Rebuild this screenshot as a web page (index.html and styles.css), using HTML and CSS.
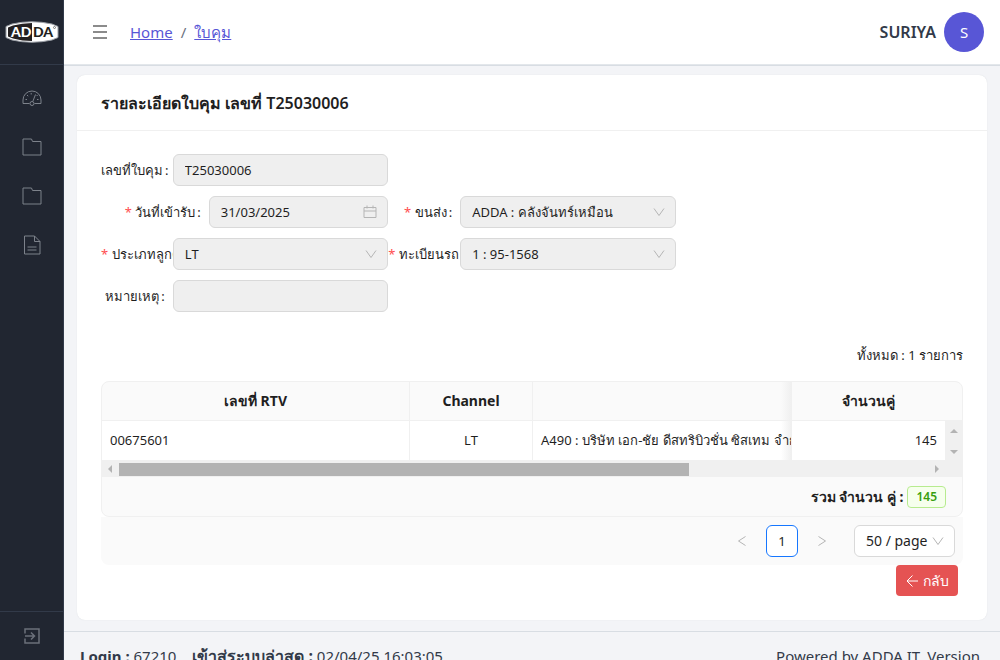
FILE: index.html
```html
<!DOCTYPE html>
<html lang="th">
<head>
<meta charset="utf-8">
<meta name="viewport" content="width=device-width, initial-scale=1">
<title>ใบคุม T25030006</title>
<link rel="stylesheet" href="styles.css">
</head>
<body>
<div class="app">
  <aside class="sidebar">
    <a class="brand" href="#" aria-label="ADDA">
      <svg width="54" height="22" viewBox="0 0 54 22">
        <path d="M7 3Q27-1.500 47 3L53 5.500V16.500L47 19Q27 23.500 7 19L1 16.500V5.500Z" fill="#fff" stroke="#9a9ea5" stroke-width="1"/>
        <path d="M8 4.500Q17 2 27 2V20Q17 20 8 17.500L3 15.500V6.500Z" fill="#231f20"/>
        <text class="logo-text" x="6" y="16" fill="#fff">AD</text>
        <text class="logo-text" x="28" y="16" fill="#231f20">DA</text>
        <circle cx="49.500" cy="6.500" r="1" fill="none" stroke="#555" stroke-width=".7"/>
      </svg>
    </a>
    <nav class="menu">
      <a href="#" aria-label="Dashboard"><svg width="20" height="20" viewBox="0 0 20 20"><path d="M7.500 15.500H1V12a9 9 0 0 1 18 0v3.500h-6.500"/><circle cx="10" cy="15.500" r="2"/><path d="M10.800 13.500 13.500 6.500M3.500 11.500h1.500M15 11.500h1.500M5 7l1.200 1.200M9.200 5v1.500M15.500 7l-.8 1"/></svg></a>
      <a href="#" aria-label="Folder 1"><svg width="20" height="20" viewBox="0 0 20 20"><path d="M1 2h8.500l1 2.500H19V18H1Z"/></svg></a>
      <a href="#" aria-label="Folder 2"><svg width="20" height="20" viewBox="0 0 20 20"><path d="M1 2h8.500l1 2.500H19V18H1Z"/></svg></a>
      <a href="#" aria-label="Document"><svg width="20" height="20" viewBox="0 0 20 20"><path d="M2.500 1h10l5.500 5.500V19H2.500ZM12.500 1v5.500H18M5.500 12h9M5.500 15h9"/></svg></a>
    </nav>
    <button class="exit" type="button" aria-label="Expand"><svg width="16" height="16" viewBox="0 0 16 16"><path d="M1 5.500V1h14v14H1v-4.500M1 8h9M7 4.500 10.500 8 7 11.500"/></svg></button>
  </aside>

  <div class="page">
    <header class="topbar">
      <button class="toggler" type="button" aria-label="Menu"><svg width="14" height="14" viewBox="0 0 14 14"><path d="M0 1h14M0 7h14M0 13h14"/></svg></button>
      <nav class="crumbs"><a href="#">Home</a><span>/</span><a href="#">ใบคุม</a></nav>
      <strong class="user">SURIYA</strong>
      <span class="avatar">S</span>
    </header>

    <main class="content">
      <section class="card">
        <h1 class="card-title">รายละเอียดใบคุม เลขที่ T25030006</h1>
        <div class="card-body">
          <form class="form">
            <div class="row">
              <div class="field"><label for="doc">เลขที่ใบคุม<span>:</span></label><div class="control"><input id="doc" value="T25030006" disabled></div></div>
            </div>
            <div class="row">
              <div class="field wide"><label for="date"><i>*</i> วันที่เข้ารับ<span>:</span></label><div class="control"><input id="date" value="31/03/2025" disabled><svg class="calendar" width="14" height="14" viewBox="0 0 14 14"><path d="M1 2.500h12v10H1ZM1 6h12M4 .5v3M10 .5v3"/></svg></div></div>
              <div class="field"><label for="ship"><i>*</i> ขนส่ง<span>:</span></label><div class="control"><select id="ship" disabled><option>ADDA : คลังจันทร์เหมือน</option></select><svg class="chevron" width="12" height="12" viewBox="0 0 12 12"><path d="M1 2.500 6 9.500 11 2.500"/></svg></div></div>
            </div>
            <div class="row">
              <div class="field"><label for="type"><i>*</i> ประเภทลูกค้า<span>:</span></label><div class="control"><select id="type" disabled><option>LT</option></select><svg class="chevron" width="12" height="12" viewBox="0 0 12 12"><path d="M1 2.500 6 9.500 11 2.500"/></svg></div></div>
              <div class="field"><label for="truck"><i>*</i> ทะเบียนรถ<span>:</span></label><div class="control"><select id="truck" disabled><option>1 : 95-1568</option></select><svg class="chevron" width="12" height="12" viewBox="0 0 12 12"><path d="M1 2.500 6 9.500 11 2.500"/></svg></div></div>
            </div>
            <div class="row">
              <div class="field"><label for="note">หมายเหตุ<span>:</span></label><div class="control"><input id="note" disabled></div></div>
            </div>
          </form>

          <p class="total">ทั้งหมด : 1 รายการ</p>

          <div class="table-box">
            <table>
              <colgroup><col class="c-rtv"><col class="c-channel"><col><col class="c-qty"><col class="c-bar"></colgroup>
              <thead><tr><th>เลขที่ RTV</th><th>Channel</th><th class="under"></th><th class="last-col">จำนวนคู่</th><th class="last-col"></th></tr></thead>
              <tbody><tr><td>00675601</td><td class="center">LT</td><td class="under">A490 : บริษัท เอก-ชัย ดีสทริบิวชั่น ซิสเทม จำกัด</td><td class="right last-col">145</td>
                <td class="vbar last-col"><svg width="17" height="39" viewBox="0 0 17 39"><path d="M5 12h8L9 8ZM5 29h8l-4 4Z"/></svg></td></tr></tbody>
            </table>
            <div class="hbar">
              <svg width="17" height="17" viewBox="0 0 17 17"><path d="M10 5v8L6 9Z"/></svg>
              <div class="track"><div class="thumb"></div></div>
              <svg width="17" height="17" viewBox="0 0 17 17"><path d="M7 5v8l4-4Z"/></svg>
            </div>
            <div class="summary"><strong>รวม จำนวน คู่ :</strong><span class="tag">145</span></div>
          </div>
          <div class="pager">
            <button type="button" disabled aria-label="Previous"><svg width="12" height="12" viewBox="0 0 12 12"><path d="M9.500 1.500 2.500 6l7 4.500"/></svg></button>
            <button type="button" class="current">1</button>
            <button type="button" disabled aria-label="Next"><svg width="12" height="12" viewBox="0 0 12 12"><path d="M2.500 1.500 9.500 6l-7 4.500"/></svg></button>
            <div class="control size"><select aria-label="Page size"><option>50 / page</option></select><svg class="chevron" width="12" height="12" viewBox="0 0 12 12"><path d="M1 2.500 6 9.500 11 2.500"/></svg></div>
          </div>
          <div class="actions"><button class="back" type="button"><svg width="14" height="14" viewBox="0 0 14 14"><path d="M13 7H2M7.500 1.500 2 7l5.500 5.500"/></svg>กลับ</button></div>
        </div>
      </section>
    </main>

    <footer class="footer">
      <div><strong>Login :</strong> 67210 <strong class="last">เข้าสู่ระบบล่าสุด :</strong> 02/04/25 16:03:05</div>
      <div>Powered by ADDA IT. Version</div>
    </footer>
  </div>
</div>
</body>
</html>
```

FILE: styles.css
```css
* { box-sizing: border-box; }

body {
  margin: 0;
  background: #f3f4f7;
  color: #1f1f1f;
  font: 13px/22px "Noto Sans", "Open Sans", sans-serif;
}

button, input, select { font: inherit; color: inherit; }
svg { display: block; fill: none; stroke: currentColor; }

.app { display: flex; height: 100vh; overflow: hidden; }

.sidebar {
  flex: none;
  display: flex;
  flex-direction: column;
  width: 64px;
  background: #212631;
  border-right: 1px solid #323a49;
  color: #7d828b;
}
.brand {
  display: flex;
  align-items: center;
  justify-content: center;
  height: 65px;
  border-bottom: 1px solid #323a49;
}
.brand svg { stroke: none; }
.logo-text { font: 900 14px Lato, sans-serif; }
.menu { flex: 1; padding-top: 8px; }
.menu a {
  display: flex;
  align-items: center;
  justify-content: center;
  height: 49px;
  color: inherit;
}
.exit {
  display: flex;
  align-items: center;
  justify-content: center;
  height: 49px;
  padding: 0;
  background: none;
  border: 0;
  border-top: 1px solid #323a49;
  color: #6b707a;
}
.exit svg { stroke-width: 1.5; }

.page { flex: 1; min-width: 0; font-size: 15px; }
.topbar {
  display: flex;
  align-items: center;
  height: 66px;
  padding: 0 16px 2px 29px;
  background: #fff;
  border-bottom: 1px solid #d8dde3;
  box-shadow: inset 0 -1px #e3e7eb;
  color: #323a49;
}
.toggler { padding: 0; background: none; border: 0; color: #666; }
.toggler svg { stroke-width: 1.5; }
.crumbs { display: flex; gap: 8px; flex: 1; margin-left: 23px; color: #6b7280; }
.crumbs a { color: #5856d6; }
.user { font-size: 16px; font-weight: 600; }
.avatar {
  width: 40px;
  height: 40px;
  margin-left: 8px;
  border-radius: 50%;
  background: #5856d6;
  color: #fff;
  line-height: 40px;
  text-align: center;
}

.content { padding: 9px 13px 11px; font-size: 13px; }
.card { background: #fff; border-radius: 8px; box-shadow: 0 0 1px #d4d6da; }
.card-title {
  margin: 0;
  padding: 1px 24px 0;
  border-bottom: 1px solid #f0f0f0;
  font-size: 16px;
  font-weight: 600;
  line-height: 54px;
}
.card-body { padding: 23px 24px 24px; }

.form { display: grid; gap: 10px; }
.row { display: grid; grid-template-columns: repeat(3, 1fr); }
.field { display: grid; grid-template-columns: 25% 75%; align-items: center; }
.field.wide { grid-template-columns: 37.5% 62.5%; }
.field label {
  overflow: hidden;
  padding-right: 8px;
  line-height: 32px;
  text-align: right;
  white-space: nowrap;
}
.field label span { margin-left: 2px; }
.field i { color: #ff4d4f; font-style: normal; }
.control { display: grid; align-items: center; }
.control > * { grid-area: 1 / 1; }
.control input, .control select {
  width: 100%;
  height: 32px;
  padding: 0 11px;
  appearance: none;
  border: 1px solid #d9d9d9;
  border-radius: 6px;
  background: #efefef;
  color: #1f1f1f;
  opacity: 1;
}
.control svg {
  justify-self: end;
  margin-right: 11px;
  color: #b5b5b5;
  pointer-events: none;
}

.total { margin: 32px 0 15px; text-align: right; }

.table-box {
  overflow: hidden;
  border: 1px solid #f0f0f0;
  border-radius: 8px;
  background: #fafafa;
}
table { width: 100%; table-layout: fixed; border-collapse: separate; border-spacing: 0; }
.c-rtv { width: 308px; }
.c-channel { width: 123px; }
.c-qty { width: 153px; }
.c-bar { width: 17px; }
th, td {
  height: 39px;
  padding: 0 8px;
  overflow: hidden;
  border-right: 1px solid #f0f0f0;
  white-space: nowrap;
}
th { border-bottom: 1px solid #f0f0f0; font-size: 14px; font-weight: 700; }
td { padding-bottom: 1px; background: #fff; }
.under { background-image: linear-gradient(to left, #f0f0f0, transparent 10px); }
.last-col { border-right: 0; }
.center { text-align: center; }
.right { text-align: right; }
td.vbar { padding: 0; background: #f0f0f0; }
.vbar svg, .hbar svg { fill: #b3b3b3; stroke: none; }
.hbar { display: flex; height: 17px; padding-right: 17px; background: #f0f0f0; }
.track { flex: 1; padding: 3px 0 1px; }
.thumb { width: 70.500%; height: 13px; background: #b3b3b3; }
.summary {
  display: flex;
  align-items: center;
  justify-content: flex-end;
  gap: 4px;
  height: 39px;
  padding: 0 16px;
  font-size: 14px;
}
.tag {
  padding: 0 8px;
  border: 1px solid #b7eb8f;
  border-radius: 4px;
  background: #f6ffed;
  color: #389e0d;
  font-size: 12px;
  font-weight: 600;
  line-height: 20px;
}

.pager {
  display: flex;
  align-items: center;
  justify-content: flex-end;
  gap: 8px;
  padding: 8px;
  border-radius: 0 0 8px 8px;
  background: #fafafa;
}
.pager button {
  display: grid;
  place-items: center;
  width: 32px;
  height: 32px;
  padding: 0;
  border: 0;
  background: none;
}
.pager button:disabled { color: #b5b5b5; }
.pager .current { border: 1px solid #1677ff; border-radius: 6px; background: #fff; }
.pager .size { width: 101px; margin-left: 8px; }
.pager .size select { background: #fff; font-size: 14px; }

.actions { display: flex; justify-content: flex-end; padding-right: 5px; }
.back {
  display: flex;
  align-items: center;
  gap: 4px;
  height: 31px;
  padding: 0 9px;
  border: 0;
  border-radius: 4px;
  background: #e55353;
  color: #fff;
  font-size: 14px;
}

.footer {
  display: flex;
  justify-content: space-between;
  padding: 13px 20px 13px 16px;
  border-top: 1px solid #d8dde3;
  color: #323a49;
}
.last { margin-left: 12px; font-size: 16px; }
```
